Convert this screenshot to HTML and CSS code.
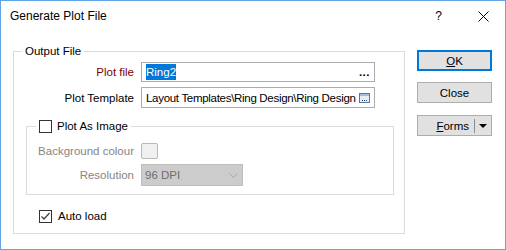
FILE: index.html
```html
<!DOCTYPE html>
<html lang="en">
<head>
  <meta charset="UTF-8">
  <title>Generate Plot File</title>
  <link rel="stylesheet" href="styles.css">
</head>
<body>

  <div class="window">
    <div class="titlebar">
      <span class="title">Generate Plot File</span>
      <span class="help">?</span>
      <svg class="close-x" width="11" height="11" viewBox="0 0 11 11">
        <path d="M0.5 0.5 L10.5 10.5 M10.5 0.5 L0.5 10.5" stroke="#000" stroke-width="1" fill="none"/>
      </svg>
    </div>

    <div class="content">
      <fieldset class="group main">
        <legend>Output File</legend>

        <div class="form">
          <label class="req">Plot file</label>
          <div class="field short">
            <span class="sel">Ring2</span>
            <span class="dots">...</span>
          </div>

          <label>Plot Template</label>
          <div class="field">
            <span class="path">Layout Templates\Ring Design\Ring Design</span>
            <svg class="browse" width="11" height="10" viewBox="0 0 11 10">
              <rect x="0.5" y="0.5" width="10" height="9" fill="#e4edf8" stroke="#55799f"/>
              <rect x="1" y="1" width="9" height="2" fill="#9fbde0"/>
              <rect x="3" y="7" width="1" height="1" fill="#2b4468"/>
              <rect x="5" y="7" width="1" height="1" fill="#2b4468"/>
              <rect x="7" y="7" width="1" height="1" fill="#2b4468"/>
            </svg>
          </div>
        </div>

        <fieldset class="group sub">
          <legend><span class="check"></span>Plot As Image</legend>
          <div class="form inner">
            <label class="off">Background colour</label>
            <div class="swatch"></div>

            <label class="off">Resolution</label>
            <div class="combo">
              <span>96 DPI</span>
              <svg class="chev" width="9" height="5" viewBox="0 0 9 5">
                <path d="M0.5 0.5 L4.5 4.5 L8.5 0.5" stroke="#a8a8a8" fill="none"/>
              </svg>
            </div>
          </div>
        </fieldset>

        <div class="auto">
          <span class="check on">
            <svg width="11" height="11" viewBox="0 0 11 11">
              <path d="M1.5 5.5 L4 8 L9.5 2" stroke="#444" stroke-width="1.3" fill="none"/>
            </svg>
          </span>
          <span>Auto load</span>
        </div>
      </fieldset>

      <div class="buttons">
        <div class="btn default"><span><u>O</u>K</span></div>
        <div class="btn close">Close</div>
        <div class="btn split">
          <span><u>F</u>orms</span>
          <span class="divider"></span>
          <svg class="arrow" width="8" height="4" viewBox="0 0 8 4">
            <path d="M0 0 L8 0 L4 4 Z" fill="#000"/>
          </svg>
        </div>
      </div>
    </div>
  </div>

</body>
</html>
```

FILE: styles.css
```css
body {
  margin: 0;
  font-family: 'Liberation Sans', Arial, sans-serif;
  font-size: 11.5px;
  color: #000;
  background: #fff;
}

.window {
  width: 506px;
  height: 250px;
  box-sizing: border-box;
  border: 1px solid #62a4e6;
  background: #fff;
}

.titlebar {
  height: 30px;
  display: flex;
  align-items: center;
  padding: 0 16px 0 9px;
  font-size: 12px;
}

.title {
  flex: 1;
}

.help {
  margin-right: 36px;
}

.content {
  display: flex;
  align-items: flex-start;
  gap: 12px;
  padding: 12px 0 0 12px;
}

.group {
  margin: 0;
  padding: 0;
  border: 1px solid #dcdcdc;
  min-width: 0;
}

.group legend {
  padding: 0 3px;
  line-height: 16px;
}

.main {
  width: 392px;
  box-sizing: border-box;
  padding-bottom: 9px;
}

.main > legend {
  margin-left: 8px;
}

.form {
  display: grid;
  grid-template-columns: 120px 234px;
  column-gap: 7px;
  row-gap: 5px;
  align-items: center;
  margin-top: 3px;
  line-height: 16px;
}

.form label {
  text-align: right;
  white-space: nowrap;
}

label.req {
  color: #800000;
}

label.off {
  color: #858585;
}

.field {
  height: 21px;
  box-sizing: border-box;
  border: 1px solid #acacac;
  display: flex;
  align-items: center;
  padding: 0 4px 0 4px;
  white-space: nowrap;
  overflow: hidden;
}

.field.short {
  height: 20px;
}

.sel {
  background: #0078d7;
  color: #fff;
}

.dots {
  margin-left: auto;
  font-weight: bold;
  letter-spacing: 0.5px;
}

.path {
  overflow: hidden;
  letter-spacing: -0.3px;
}

.browse {
  margin-left: auto;
  flex-shrink: 0;
}

.sub {
  width: 368px;
  box-sizing: border-box;
  margin: 10px 0 0 12px;
  padding-bottom: 8px;
}

.sub legend {
  margin-left: 9px;
  display: flex;
  align-items: center;
  gap: 5px;
}

.check {
  width: 13px;
  height: 13px;
  box-sizing: border-box;
  border: 1px solid #333;
  background: #fff;
  display: inline-flex;
  align-items: center;
  justify-content: center;
}

.form.inner {
  grid-template-columns: 107px 102px;
  margin-top: 9px;
}

.swatch {
  width: 17px;
  height: 16px;
  box-sizing: border-box;
  border: 1px solid #b8b8b8;
  border-radius: 2px;
  background: #f0f0f0;
}

.combo {
  height: 22px;
  box-sizing: border-box;
  border: 1px solid #bdbdbd;
  background: #cccccc;
  color: #6d6d6d;
  display: flex;
  align-items: center;
  justify-content: space-between;
  padding: 0 4px 0 3px;
}

.auto {
  display: flex;
  align-items: center;
  gap: 6px;
  height: 16px;
  margin: 13px 0 0 25px;
}

.buttons {
  width: 75px;
  display: flex;
  flex-direction: column;
  margin-top: 7px;
}

.btn {
  height: 21px;
  box-sizing: border-box;
  border: 1px solid #adadad;
  background: #e1e1e1;
  display: flex;
  align-items: center;
  justify-content: center;
}

.btn.default {
  border: 2px solid #0078d7;
}

.btn.close {
  margin-top: 11px;
}

.btn.split {
  margin-top: 12px;
  justify-content: flex-end;
  padding-right: 4px;
}

.divider {
  width: 1px;
  height: 14px;
  background: #8c8c8c;
  margin: 0 4px 0 5px;
}
```
